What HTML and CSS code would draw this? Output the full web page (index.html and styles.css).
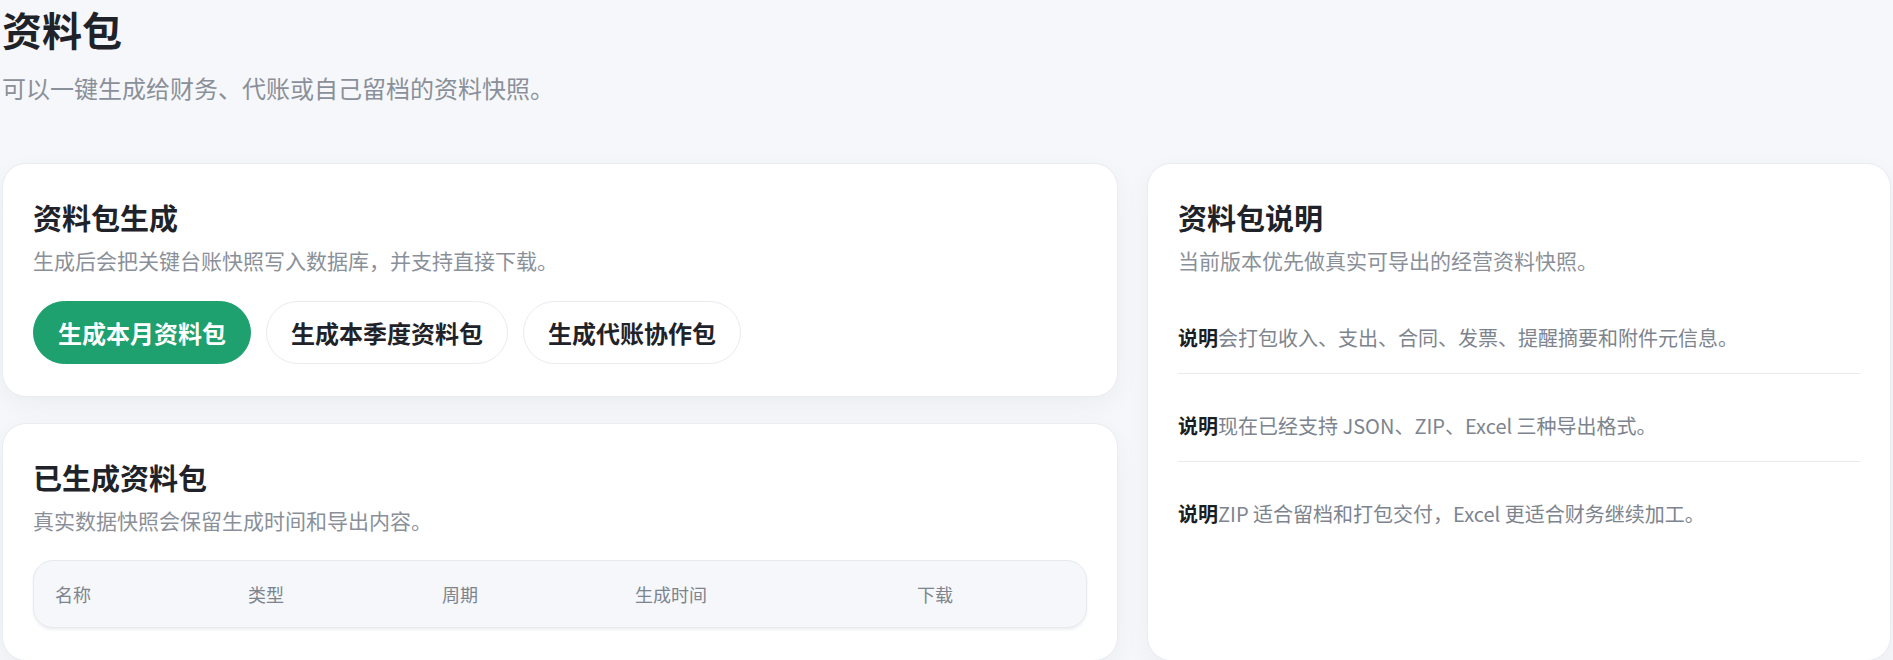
FILE: index.html
```html
<!DOCTYPE html>
<html lang="zh-CN">
<head>
<meta charset="utf-8">
<title>资料包</title>
<link rel="stylesheet" href="styles.css">
</head>
<body>
<main class="page">
  <header class="page-head">
    <h1 class="page-title">资料包</h1>
    <p class="page-sub">可以一键生成给财务、代账或自己留档的资料快照。</p>
  </header>

  <div class="layout">
    <section class="card card-gen">
      <h2 class="card-title">资料包生成</h2>
      <p class="card-desc">生成后会把关键台账快照写入数据库，并支持直接下载。</p>
      <div class="btn-row">
        <button class="btn btn-primary">生成本月资料包</button>
        <button class="btn">生成本季度资料包</button>
        <button class="btn">生成代账协作包</button>
      </div>
    </section>

    <section class="card card-list">
      <h2 class="card-title">已生成资料包</h2>
      <p class="card-desc">真实数据快照会保留生成时间和导出内容。</p>
      <div class="table">
        <div class="table-head">
          <span>名称</span>
          <span>类型</span>
          <span>周期</span>
          <span>生成时间</span>
          <span>下载</span>
        </div>
      </div>
    </section>

    <aside class="card card-info">
      <h2 class="card-title">资料包说明</h2>
      <p class="card-desc">当前版本优先做真实可导出的经营资料快照。</p>
      <ul class="notes">
        <li class="note"><strong>说明</strong>会打包收入、支出、合同、发票、提醒摘要和附件元信息。</li>
        <li class="note"><strong>说明</strong>现在已经支持 JSON、ZIP、Excel 三种导出格式。</li>
        <li class="note"><strong>说明</strong>ZIP 适合留档和打包交付，Excel 更适合财务继续加工。</li>
      </ul>
    </aside>
  </div>
</main>
</body>
</html>
```

FILE: styles.css
```css
* { box-sizing: border-box; }

html, body {
  margin: 0;
  padding: 0;
}

body {
  background: #f6f7fa;
  font-family: "Noto Sans CJK SC", "Noto Sans", sans-serif;
  color: #1f2329;
  overflow: hidden;
}

.page {
  padding: 0 2px;
}

.page-title {
  margin: 0;
  font-size: 40px;
  line-height: 58px;
  font-weight: 700;
  color: #1f2329;
}

.page-sub {
  margin: 13px 0 0;
  font-size: 24px;
  line-height: 34px;
  color: #8a9099;
}

.layout {
  margin-top: 58px;
  display: grid;
  grid-template-columns: 3fr 2fr;
  grid-template-rows: auto auto;
  column-gap: 29px;
  row-gap: 26px;
}

.card {
  background: #ffffff;
  border: 1px solid #e9ecf1;
  border-radius: 24px;
  box-shadow: 0 8px 26px rgba(20, 30, 50, 0.045);
  padding: 33px 30px 32px;
}

.card-gen { grid-column: 1; grid-row: 1; }
.card-list { grid-column: 1; grid-row: 2; padding-top: 33px; }
.card-info { grid-column: 2; grid-row: 1 / span 2; }

.card-title {
  margin: 0;
  font-size: 29px;
  line-height: 40px;
  font-weight: 600;
  color: #1f2329;
}

.card-desc {
  margin: 8px 0 0;
  font-size: 21px;
  line-height: 30px;
  color: #8a9099;
}

.btn-row {
  margin-top: 26px;
  display: flex;
  gap: 15px;
}

.btn {
  font-family: inherit;
  font-size: 24px;
  line-height: 33px;
  font-weight: 600;
  color: #1f2329;
  background: #ffffff;
  border: 1px solid #e8ebf0;
  border-radius: 999px;
  padding: 14px 24px;
  cursor: pointer;
}

.btn-primary {
  background: #1fa06f;
  border-color: #1fa06f;
  color: #ffffff;
}

.table {
  margin-top: 25px;
  background: #f5f7fa;
  border: 1px solid #e6eaef;
  border-radius: 20px;
  box-shadow: 0 2px 3px rgba(20, 30, 50, 0.07);
}

.table-head {
  display: grid;
  grid-template-columns: 193px 194px 193px 282px 1fr;
  align-items: center;
  height: 66px;
  padding-left: 21px;
  font-size: 18px;
  color: #7d848e;
}

.notes {
  list-style: none;
  margin: 28px 0 0;
  padding: 0;
  display: flex;
  flex-direction: column;
  gap: 17px;
}

.note {
  padding: 20px 0;
  border-bottom: 1px solid #e8ebef;
  font-size: 20px;
  line-height: 30px;
  color: #7d848e;
}

.note:last-child {
  border-bottom: none;
}

.note strong {
  color: #1a1d21;
  font-weight: 700;
}
```
